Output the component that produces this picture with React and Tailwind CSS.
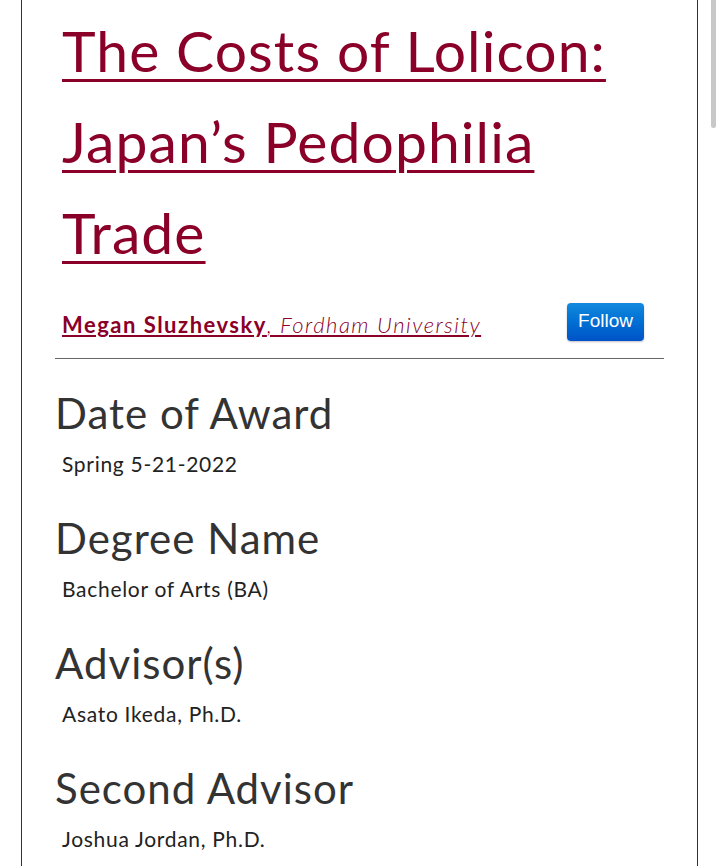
export default function App() {
  const sections = [
    { label: "Date of Award", value: "Spring 5-21-2022" },
    { label: "Degree Name", value: "Bachelor of Arts (BA)" },
    { label: "Advisor(s)", value: "Asato Ikeda, Ph.D." },
    { label: "Second Advisor", value: "Joshua Jordan, Ph.D." },
  ];

  return (
    <div className="relative h-[866px] overflow-hidden bg-white font-['Lato',sans-serif]">
      {/* fake overlay scrollbar */}
      <div className="absolute right-[4px] top-0 h-[128px] w-[5px] rounded-b-full bg-[#c8c8c8]" />

      <div className="ml-[21px] w-[677px] h-full border-x border-[#333] px-[33px]">
        {/* Title */}
        <h1 className="pl-[7px] pt-[5px] text-[57px] leading-[91px] tracking-[1.1px] text-[#8a0028]">
          <a href="#" className="underline decoration-[3px] underline-offset-[7px]">
            The Costs of Lolicon: Japan’s Pedophilia Trade
          </a>
        </h1>

        {/* Author */}
        <div className="flex items-center justify-between pl-[7px] pr-[20px] pt-[24px] pb-[17px] border-b border-[#666]">
          <p className="pt-[6px] text-[22px] tracking-[1.5px] text-[#8a0028]">
            <a href="#" className="underline">
              <strong className="font-bold">Megan Sluzhevsky</strong>
              <em className="font-light">, Fordham University</em>
            </a>
          </p>
          <button className="h-[38px] w-[77px] rounded-[4px] bg-gradient-to-b from-[#138ade] to-[#0052c8] text-white text-[19px] font-['Liberation_Sans',sans-serif] shadow-[0_1px_2px_rgba(0,0,0,0.25)]">
            Follow
          </button>
        </div>

        {/* Metadata */}
        <div className="pt-[28px]">
          {sections.map((s) => (
            <div key={s.label} className="mb-[32px]">
              <h2 className="text-[42px] leading-[52px] tracking-[1px] text-[#333]">{s.label}</h2>
              <p className="pl-[7px] pt-[9px] text-[21px] leading-[32px] tracking-[0.7px] text-[#222]">{s.value}</p>
            </div>
          ))}
        </div>
      </div>
    </div>
  );
}
